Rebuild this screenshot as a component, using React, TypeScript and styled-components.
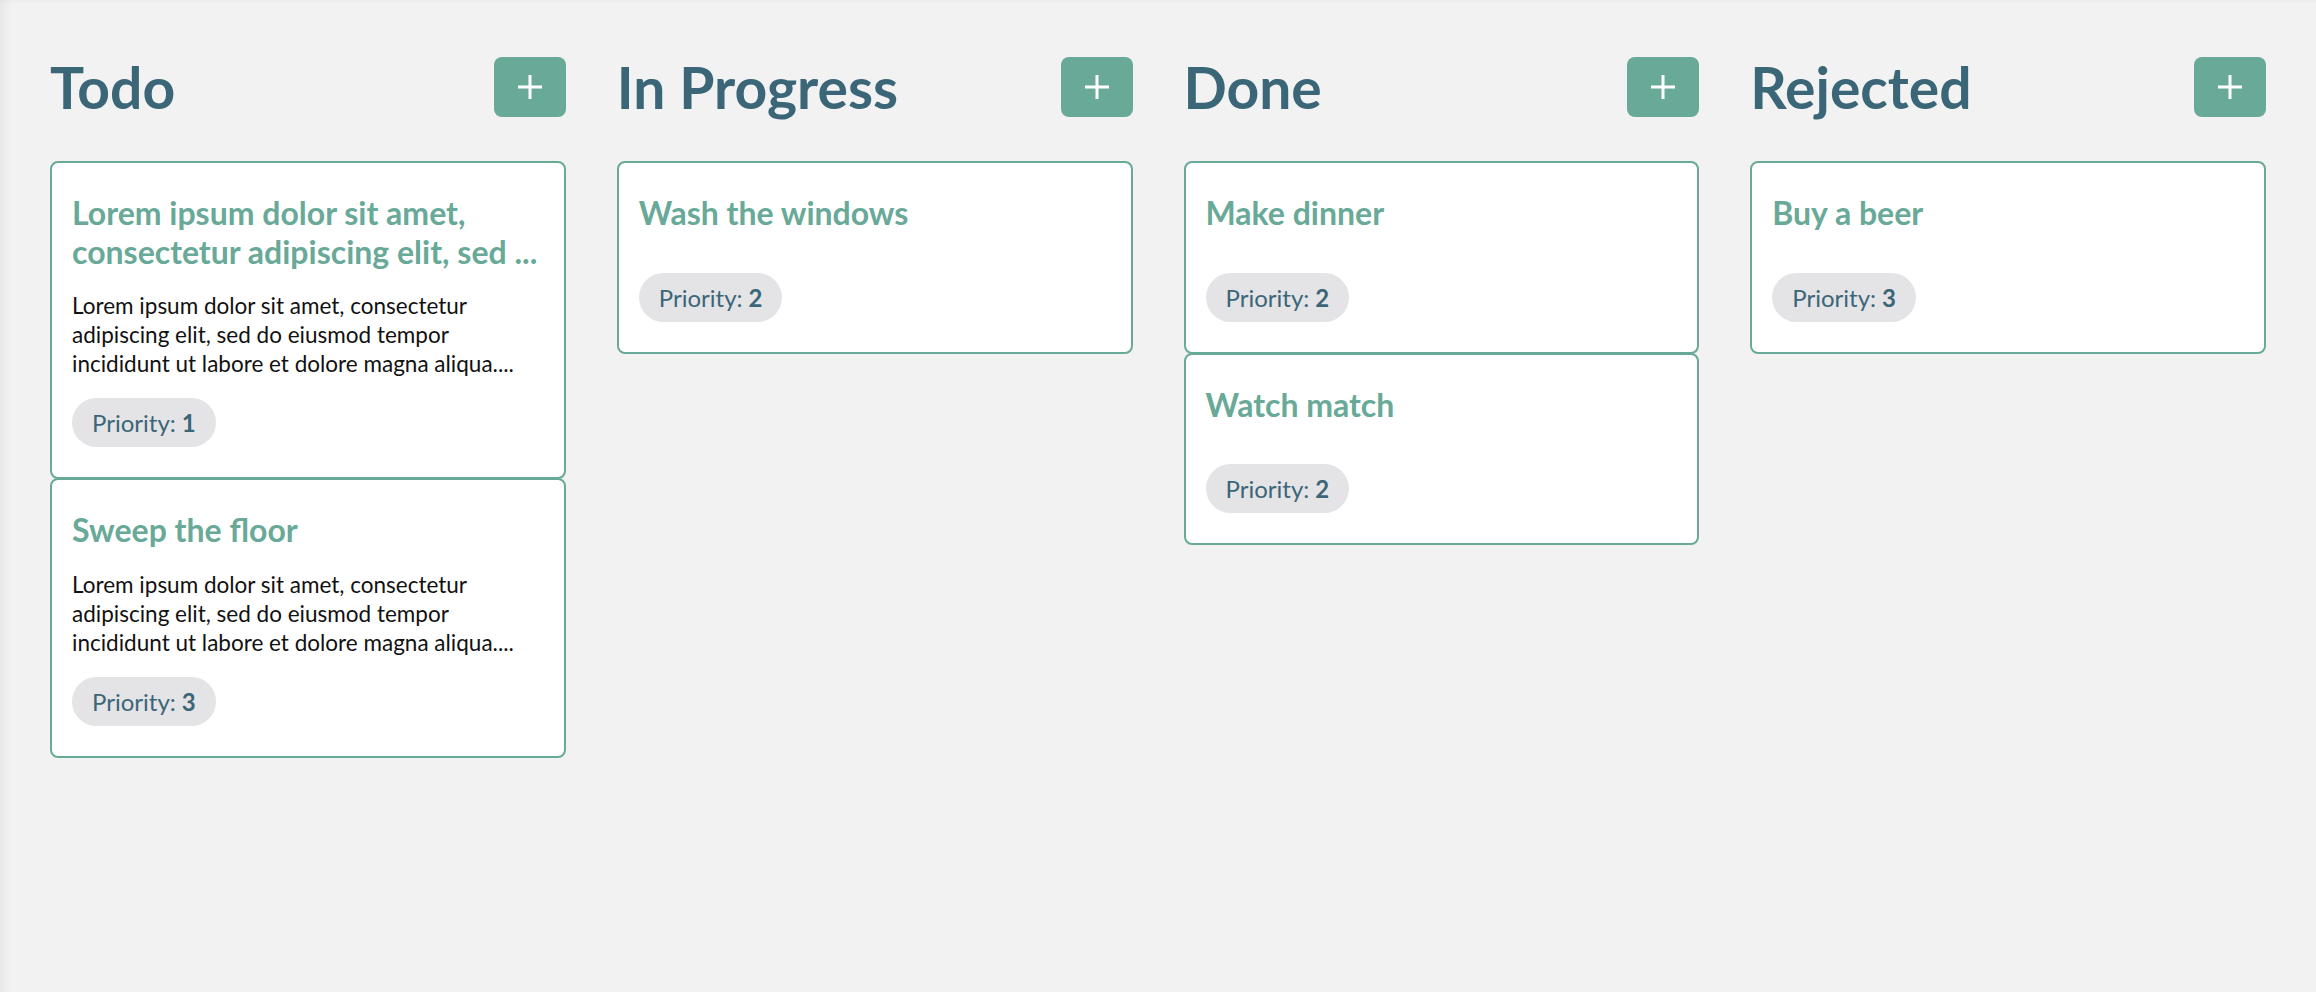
import styled, { createGlobalStyle } from 'styled-components';

interface Task {
  id: number;
  title: string;
  description?: string;
  priority: number;
}

interface Lane {
  name: string;
  tasks: Task[];
}

const LOREM =
  'Lorem ipsum dolor sit amet, consectetur adipiscing elit, sed do eiusmod tempor incididunt ut labore et dolore magna aliqua. Ut enim ad minim veniam, quis nostrud exercitation ullamco laboris.';

// long texts get cut in code, not by css
const shorten = (text: string, max: number) => (text.length > max ? `${text.slice(0, max)}...` : text);

const lanes: Lane[] = [
  {
    name: 'Todo',
    tasks: [
      { id: 1, title: LOREM, description: LOREM, priority: 1 },
      { id: 2, title: 'Sweep the floor', description: LOREM, priority: 3 },
    ],
  },
  {
    name: 'In Progress',
    tasks: [{ id: 3, title: 'Wash the windows', priority: 2 }],
  },
  {
    name: 'Done',
    tasks: [
      { id: 4, title: 'Make dinner', priority: 2 },
      { id: 5, title: 'Watch match', priority: 2 },
    ],
  },
  {
    name: 'Rejected',
    tasks: [{ id: 6, title: 'Buy a beer', priority: 3 }],
  },
];

const colors = {
  page: '#f2f2f2',
  heading: '#3b6677',
  accent: '#68a998',
  pill: '#e4e4e7',
  text: '#111111',
};

function PlusIcon() {
  return (
    <svg width="24" height="24" viewBox="0 0 24 24" fill="none">
      <path d="M12 0v24M0 12h24" stroke="#ffffff" strokeWidth="3" />
    </svg>
  );
}

function TaskCard({ task }: { task: Task }) {
  return (
    <Card>
      <Title>{shorten(task.title, 61)}</Title>
      <Description>{task.description ? shorten(task.description, 123) : ''}</Description>
      <Priority>
        Priority: <b>{task.priority}</b>
      </Priority>
    </Card>
  );
}

function App() {
  return (
    <>
      <GlobalStyle />
      <Board>
        {lanes.map((lane) => (
          <Column key={lane.name}>
            <Header>
              <LaneTitle>{lane.name}</LaneTitle>
              <AddButton type="button" aria-label={`Add to ${lane.name}`}>
                <PlusIcon />
              </AddButton>
            </Header>
            <CardList>
              {lane.tasks.map((task) => (
                <TaskCard key={task.id} task={task} />
              ))}
            </CardList>
          </Column>
        ))}
      </Board>
    </>
  );
}

export default App;

const GlobalStyle = createGlobalStyle`
  html, body {
    margin: 0;
    padding: 0;
    background: ${colors.page};
    font-family: Lato, "Open Sans", sans-serif;
  }
`;

const Board = styled.main`
  display: grid;
  grid-template-columns: repeat(4, 1fr);
  column-gap: 51px;
  align-items: start;
  box-sizing: border-box;
  min-height: 100vh;
  padding: 53px 50px 50px;
  background: ${colors.page};
  box-shadow:
    inset 14px 0 12px -12px rgba(0, 0, 0, 0.07),
    inset 0 6px 6px -6px rgba(0, 0, 0, 0.05);
`;

const Column = styled.section`
  display: flex;
  flex-direction: column;
`;

const Header = styled.div`
  display: flex;
  align-items: center;
  justify-content: space-between;
  margin-bottom: 40px;
`;

const LaneTitle = styled.h2`
  margin: 0;
  font-size: 57px;
  font-weight: 700;
  line-height: 1.2;
  color: ${colors.heading};
`;

const AddButton = styled.button`
  display: flex;
  align-items: center;
  justify-content: center;
  width: 72px;
  height: 60px;
  padding: 0;
  border: none;
  border-radius: 8px;
  background: ${colors.accent};
  cursor: pointer;
`;

const CardList = styled.div`
  display: flex;
  flex-direction: column;
`;

const Card = styled.article`
  display: flex;
  flex-direction: column;
  gap: 20px;
  padding: 31px 20px 30px;
  border: 2px solid ${colors.accent};
  border-radius: 8px;
  background: #ffffff;

  & + & {
    margin-top: -1px;
  }
`;

const Title = styled.h3`
  margin: 0;
  font-size: 32px;
  font-weight: 700;
  line-height: 1.2;
  color: ${colors.accent};
`;

const Description = styled.p`
  margin: 0;
  font-size: 22.5px;
  line-height: 29px;
  color: ${colors.text};
`;

const Priority = styled.span`
  align-self: flex-start;
  padding: 0 20px;
  height: 49px;
  display: inline-flex;
  align-items: center;
  border-radius: 999px;
  background: ${colors.pill};
  font-size: 24px;
  color: ${colors.heading};

  b {
    margin-left: 0.25em;
    font-weight: 700;
  }
`;
